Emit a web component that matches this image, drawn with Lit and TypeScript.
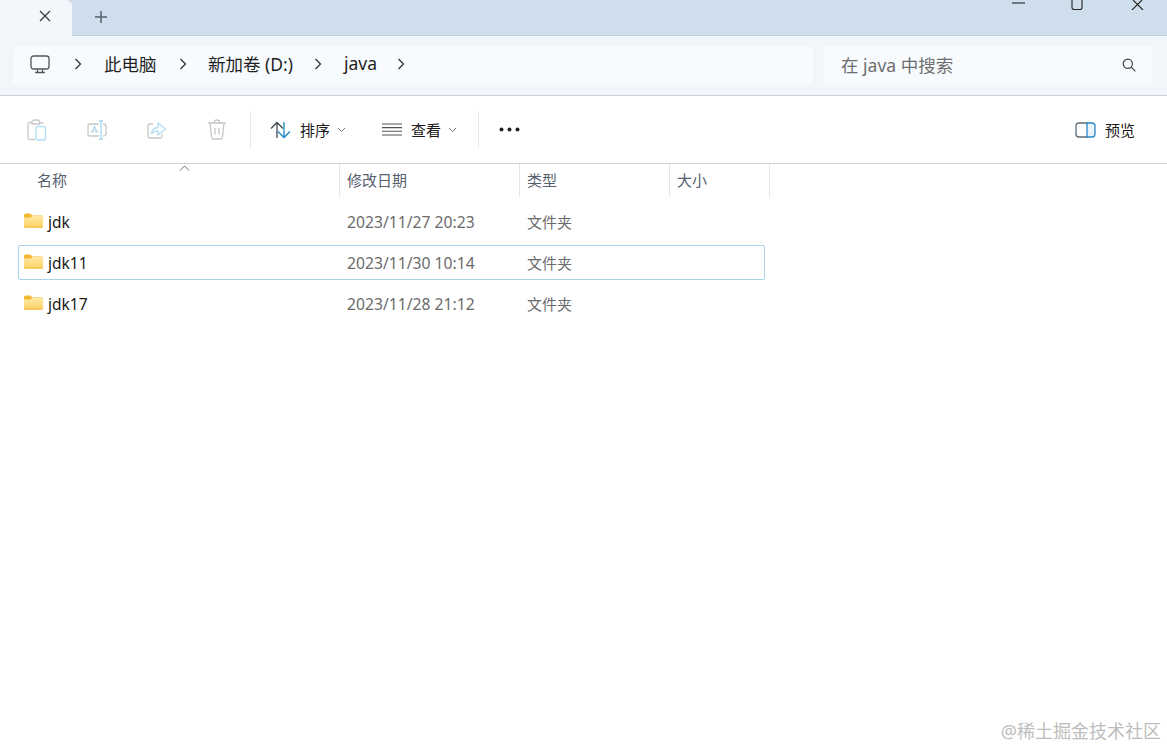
import { LitElement, html, css, svg, unsafeCSS } from "lit";
import { customElement } from "lit/decorators.js";

const FONT = unsafeCSS(`"Noto Sans", "Noto Sans CJK SC", sans-serif`);

const files = [
  { name: "jdk", date: "2023/11/27 20:23", selected: false },
  { name: "jdk11", date: "2023/11/30 10:14", selected: true },
  { name: "jdk17", date: "2023/11/28 21:12", selected: false },
];

const chevronRight = html`<svg class="crumb-sep" width="10" height="14" viewBox="0 0 10 14" fill="none" stroke="#333" stroke-width="1.3"><path d="M2.5 2 L7.5 7 L2.5 12"/></svg>`;
const chevronDown = html`<svg class="caret" width="9" height="6" viewBox="0 0 9 6" fill="none" stroke="#777" stroke-width="1"><path d="M1 1 L4.5 4.5 L8 1"/></svg>`;

const folder = svg`<svg class="folder" width="19" height="15" viewBox="0 0 19 15">
  <defs><linearGradient id="fb" x1="0" y1="0" x2="0" y2="1"><stop offset="0" stop-color="#fee9a6"/><stop offset="1" stop-color="#fcd264"/></linearGradient></defs>
  <path d="M0 2 Q0 0.5 1.5 0.5 H6 L8.5 2.5 H17.5 Q19 2.5 19 4 V13.5 Q19 14.5 17.5 14.5 H1.5 Q0 14.5 0 13.5 Z" fill="#f2b92f"/>
  <path d="M0 4.5 L6.5 4.5 L8.5 3 H17.5 Q19 3 19 4.5 V13.5 Q19 14.5 17.5 14.5 H1.5 Q0 14.5 0 13.5 Z" fill="url(#fb)"/>
  <path d="M0 13.4 H19 V13.5 Q19 14.5 17.5 14.5 H1.5 Q0 14.5 0 13.5 Z" fill="#f0bd45"/>
</svg>`;

@customElement("app-root")
export class AppRoot extends LitElement {
  static styles = css`
    :host {
      display: block;
      position: relative;
      width: 1167px;
      height: 748px;
      overflow: hidden;
      background: #fff;
      font-family: ${FONT};
      color: #1a1a1a;
    }
    svg { display: block; flex: none; }

    .titlebar {
      height: 36px;
      box-sizing: border-box;
      background: #cfdeec;
      border-bottom: 1px solid #bfd0e0;
      display: flex;
    }
    .tab {
      width: 72px;
      height: 36px;
      background: #f3f7fb;
      border-top-right-radius: 6px;
      display: flex;
      align-items: center;
      box-sizing: border-box;
      padding: 0 0 4px 39px;
      margin-right: 22px;
    }
    .plus { margin-top: 10px; }
    .win-controls {
      margin-left: auto;
      display: flex;
      align-items: flex-start;
    }
    .win-min { margin-right: 46px; margin-top: 2px; }
    .win-max { margin-right: 48px; }
    .win-close { margin-right: 23px; }

    .addressbar {
      height: 60px;
      box-sizing: border-box;
      background: #f2f6fa;
      border-bottom: 1px solid #c9d0d8;
      padding: 10px 15px 10px 13px;
      display: flex;
      gap: 11px;
    }
    .crumbs {
      width: 800px;
      height: 39px;
      background: #f8fbfe;
      border-radius: 5px;
      display: flex;
      align-items: center;
      font-size: 17.5px;
      color: #1f1f1f;
      padding: 0 0 3px 17px;
      box-sizing: border-box;
    }
    .pc { margin-right: 23px; }
    .crumb { box-sizing: border-box; white-space: nowrap; padding-bottom: 2px; }
    .crumb.pc-name { width: 95px; padding-left: 21px; }
    .crumb.drive { width: 125px; padding-left: 20px; }
    .crumb.folder-name { width: 73px; padding-left: 21px; }
    .search {
      width: 328px;
      height: 39px;
      background: #f8fbfe;
      border-radius: 5px;
      display: flex;
      align-items: center;
      justify-content: space-between;
      padding: 0 16px 2px 17px;
      box-sizing: border-box;
      font-size: 17.5px;
      color: #6e6e6e;
    }

    .toolbar {
      height: 68px;
      box-sizing: border-box;
      border-bottom: 1px solid #cfcfcf;
      display: flex;
      align-items: center;
      padding-left: 27px;
      padding-right: 32px;
      font-size: 15px;
      color: #1a1a1a;
    }
    .tool-icon { margin-right: 40px; }
    .tool-icon.last { margin-right: 23px; }
    .divider { width: 1px; height: 38px; background: #eaeaea; }
    .divider.first { margin-right: 19px; }
    .tool { display: flex; align-items: center; }
    .tool .label { margin-left: 9px; white-space: nowrap; }
    .tool .caret { margin-left: 7px; }
    .tool.sort { margin-right: 36px; }
    .tool.view { margin-right: 21px; }
    .dots { margin-left: 20px; }
    .preview { margin-left: auto; }

    .sort-mark { position: absolute; left: 179px; top: 165px; }
    .header {
      height: 32px;
      display: grid;
      grid-template-columns: 340px 180px 150px 100px;
      width: 770px;
      font-size: 15px;
      color: #56606f;
    }
    .header > div {
      padding-left: 7px;
      border-right: 1px solid #e5e5e5;
      box-sizing: border-box;
      line-height: 33px;
    }
    .header > div:first-child { padding-left: 37px; }

    .rows {
      padding: 8px 0 0 18px;
      display: flex;
      flex-direction: column;
      gap: 6px;
    }
    .row {
      width: 747px;
      height: 35px;
      box-sizing: border-box;
      border: 1px solid transparent;
      border-radius: 2px;
      display: grid;
      grid-template-columns: 321px 180px 1fr;
      align-items: center;
      font-size: 15px;
      color: #6b6b6b;
    }
    .row.selected { border-color: #a6d5ea; }
    .name {
      display: flex;
      align-items: center;
      gap: 5px;
      padding-left: 5px;
      color: #1a1a1a;
      font-size: 15.5px;
    }
    .date { padding-left: 7px; font-size: 15.7px; }
    .kind { padding-left: 7px; }
    .folder { margin-top: -3px; }

    .watermark {
      position: absolute;
      right: 6px;
      bottom: 5px;
      font-size: 18px;
      color: #bdbdbd;
      white-space: nowrap;
    }
  `;

  render() {
    return html`
      <div class="titlebar">
        <div class="tab">
          <svg width="12" height="12" viewBox="0 0 12 12" stroke="#333" stroke-width="1.1"><path d="M1 1 L11 11 M11 1 L1 11"/></svg>
        </div>
        <svg class="plus" width="14" height="14" viewBox="0 0 14 14" stroke="#55606c" stroke-width="1.5"><path d="M7 1 V13 M1 7 H13"/></svg>
        <div class="win-controls">
          <svg class="win-min" width="13" height="2" viewBox="0 0 13 2" stroke="#222" stroke-width="1.1"><path d="M0 1 H13"/></svg>
          <svg class="win-max" width="12" height="10" viewBox="0 0 12 10" fill="none" stroke="#222" stroke-width="1.1"><path d="M1 0 V7.5 Q1 9.5 3 9.5 H9 Q11 9.5 11 7.5 V0"/></svg>
          <svg class="win-close" width="13" height="10" viewBox="0 0 13 10" stroke="#222" stroke-width="1.1"><path d="M2 0 L12 10 M11 0 L1 10"/></svg>
        </div>
      </div>

      <div class="addressbar">
        <div class="crumbs">
          <svg class="pc" width="20" height="19" viewBox="0 0 20 19" fill="none" stroke="#555" stroke-width="1.3">
            <rect x="1" y="1" width="18" height="13" rx="2.5"/>
            <path d="M7.5 14.5 V17 M12.5 14.5 V17 M5 17.5 H15"/>
          </svg>
          ${chevronRight}
          <span class="crumb pc-name">此电脑</span>
          ${chevronRight}
          <span class="crumb drive">新加卷 (D:)</span>
          ${chevronRight}
          <span class="crumb folder-name">java</span>
          ${chevronRight}
        </div>
        <div class="search">
          <span>在 java 中搜索</span>
          <svg width="14" height="14" viewBox="0 0 14 14" fill="none" stroke="#444" stroke-width="1.2"><circle cx="5.8" cy="5.8" r="4.6"/><path d="M9.2 9.2 L13.4 13.4"/></svg>
        </div>
      </div>

      <div class="toolbar">
        <svg class="tool-icon" width="20" height="22" viewBox="0 0 20 22" fill="none">
          <path d="M5 3.5 H2.5 Q1 3.5 1 5 V19 Q1 20.5 2.5 20.5 H8" stroke="#c8c8c8" stroke-width="1.3"/>
          <path d="M5 3 Q5 1 7.5 1 H10 Q12.5 1 12.5 3 V5 H5 Z M12.5 3.5 H14 Q15.5 3.5 15.5 5" stroke="#c8c8c8" stroke-width="1.3"/>
          <rect x="9" y="7.5" width="9.5" height="13.5" rx="2" stroke="#b5dcf2" stroke-width="1.3"/>
        </svg>
        <svg class="tool-icon" width="20" height="20" viewBox="0 0 20 20" fill="none">
          <path d="M12 4 H3 Q1 4 1 6 V14 Q1 16 3 16 H12 M16 4 Q19 4 19 6.5 V13.5 Q19 16 16 16" stroke="#c8c8c8" stroke-width="1.3"/>
          <path d="M4.5 13 L7.5 6.5 L10.5 13 M5.6 11 H9.4" stroke="#a9cfe6" stroke-width="1.1"/>
          <path d="M14 1 V19 M12 1 H16 M12 19 H16" stroke="#a5d6f2" stroke-width="1.3"/>
        </svg>
        <svg class="tool-icon" width="20" height="20" viewBox="0 0 20 20" fill="none">
          <path d="M6 4 H3 Q1 4 1 6 V16 Q1 18 3 18 H13 Q15 18 15 16 V14" stroke="#c8c8c8" stroke-width="1.3"/>
          <path d="M4.5 13.5 Q5 8 11 7.5 V3 L18.5 9 L11 15 V11 Q7 11 4.5 13.5 Z" stroke="#b5dcf2" stroke-width="1.3" stroke-linejoin="round"/>
        </svg>
        <svg class="tool-icon last" width="20" height="21" viewBox="0 0 20 21" fill="none" stroke="#c8c8c8" stroke-width="1.3">
          <path d="M1 4 H19 M7 4 Q7 1 10 1 Q13 1 13 4"/>
          <path d="M3 4 L4.5 18 Q4.7 20 6.5 20 H13.5 Q15.3 20 15.5 18 L17 4"/>
          <path d="M8 9 V15.5 M12 9 V15.5"/>
        </svg>
        <div class="divider first"></div>
        <div class="tool sort">
          <svg width="21" height="18" viewBox="0 0 21 18" fill="none" stroke-width="1.3">
            <path d="M7 17 V1.5 M1 7.5 L7 1.5 L13 7.5" stroke="#3f4a54"/>
            <path d="M14 1 V16.5 M8 10.5 L14 16.5 L20 10.5" stroke="#1d87c4"/>
          </svg>
          <span class="label">排序</span>
          ${chevronDown}
        </div>
        <div class="tool view">
          <svg width="20" height="13" viewBox="0 0 20 13" stroke="#555" stroke-width="1.1"><path d="M0 1 H20 M0 4.6 H20 M0 8.2 H20 M0 12 H20"/></svg>
          <span class="label">查看</span>
          ${chevronDown}
        </div>
        <div class="divider"></div>
        <svg class="dots" width="21" height="5" viewBox="0 0 21 5" fill="#222"><circle cx="2.5" cy="2.5" r="2"/><circle cx="10.5" cy="2.5" r="2"/><circle cx="18.5" cy="2.5" r="2"/></svg>
        <div class="tool preview">
          <svg width="21" height="16" viewBox="0 0 21 16" fill="none">
            <path d="M13 1 H4 Q1 1 1 4 V12 Q1 15 4 15 H13" stroke="#5f6b75" stroke-width="1.3"/>
            <path d="M12 1 H17 Q20 1 20 4 V12 Q20 15 17 15 H12 Z" stroke="#2c86c8" stroke-width="1.3" fill="#eaf4fb"/>
          </svg>
          <span class="label">预览</span>
        </div>
      </div>

      <svg class="sort-mark" width="11" height="6" viewBox="0 0 11 6" fill="none" stroke="#666" stroke-width="1"><path d="M1 5.5 L5.5 1 L10 5.5"/></svg>
      <div class="header">
        <div>名称</div>
        <div>修改日期</div>
        <div>类型</div>
        <div>大小</div>
      </div>

      <div class="rows">
        ${files.map(
          (f) => html`
            <div class="row ${f.selected ? "selected" : ""}">
              <div class="name">${folder}<span>${f.name}</span></div>
              <div class="date">${f.date}</div>
              <div class="kind">文件夹</div>
            </div>
          `
        )}
      </div>

      <div class="watermark">@稀土掘金技术社区</div>
    `;
  }
}
